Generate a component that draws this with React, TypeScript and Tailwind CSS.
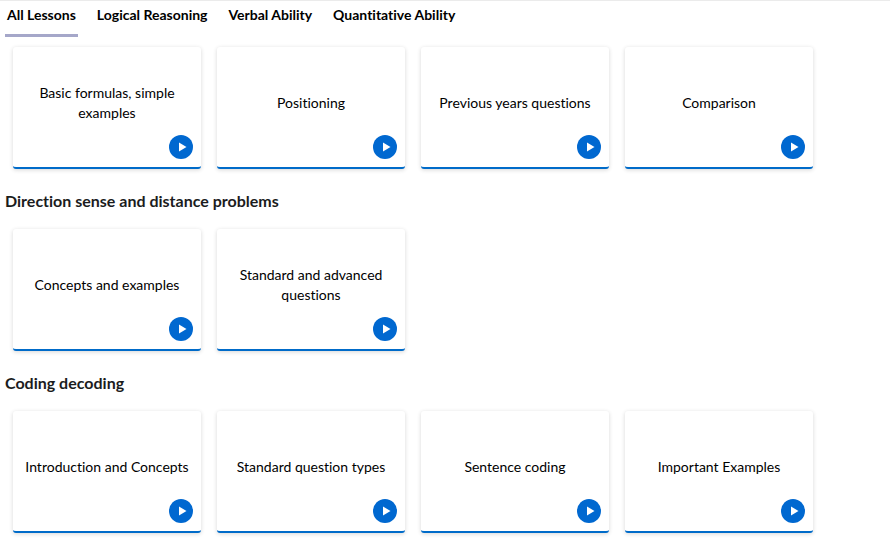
import React, { useState } from 'react';

interface LessonGroup {
  id: string;
  title?: string;
  lessons: string[];
}

const TABS = ['All Lessons', 'Logical Reasoning', 'Verbal Ability', 'Quantitative Ability'];

const LESSON_GROUPS: LessonGroup[] = [
  {
    id: 'basics',
    lessons: [
      'Basic formulas, simple examples',
      'Positioning',
      'Previous years questions',
      'Comparison',
    ],
  },
  {
    id: 'direction-sense',
    title: 'Direction sense and distance problems',
    lessons: ['Concepts and examples', 'Standard and advanced questions'],
  },
  {
    id: 'coding-decoding',
    title: 'Coding decoding',
    lessons: [
      'Introduction and Concepts',
      'Standard question types',
      'Sentence coding',
      'Important Examples',
    ],
  },
];

const PlayIcon: React.FC = () => (
  <svg className="w-6 h-6" viewBox="0 0 24 24" aria-hidden="true">
    <circle cx="12" cy="12" r="12" fill="#0068d0" />
    <path d="M10 7.5v9l7.5-4.5z" fill="#fff" />
  </svg>
);

const LessonCard: React.FC<{ title: string }> = ({ title }) => (
  <button
    type="button"
    className="flex flex-col w-[188px] h-[122px] px-2 pb-2 rounded-[3px] border-b-2 border-[#006bc9] bg-white shadow-[0_1px_4px_rgba(0,0,0,0.16)] cursor-pointer"
  >
    <span className="flex flex-1 items-center justify-center w-full pt-6 px-1 text-center">
      {title}
    </span>
    <span className="self-end">
      <PlayIcon />
    </span>
  </button>
);

export default function App() {
  const [activeTab, setActiveTab] = useState(TABS[0]);

  return (
    <main className="min-h-screen border-t border-[#ebebeb] bg-white pb-4 font-['Lato',sans-serif] text-sm leading-5 text-black [font-variant-ligatures:none]">
      <nav className="flex gap-[17px] px-[5px] pt-1">
        {TABS.map(tab => (
          <button
            key={tab}
            type="button"
            onClick={() => setActiveTab(tab)}
            className={`px-[2px] pb-[9px] border-b-[3px] font-bold cursor-pointer ${
              tab === activeTab ? 'border-[#a5a7c9]' : 'border-transparent'
            }`}
          >
            {tab}
          </button>
        ))}
      </nav>

      {LESSON_GROUPS.map(group => (
        <section key={group.id}>
          {group.title && (
            <h2 className="px-[5px] pt-5 text-base leading-6 font-bold text-[#1b1c1d]">
              {group.title}
            </h2>
          )}
          <div className={`flex flex-wrap gap-4 px-[13px] ${group.title ? 'pt-4' : 'pt-[10px]'}`}>
            {group.lessons.map(lesson => (
              <LessonCard key={lesson} title={lesson} />
            ))}
          </div>
        </section>
      ))}
    </main>
  );
}
